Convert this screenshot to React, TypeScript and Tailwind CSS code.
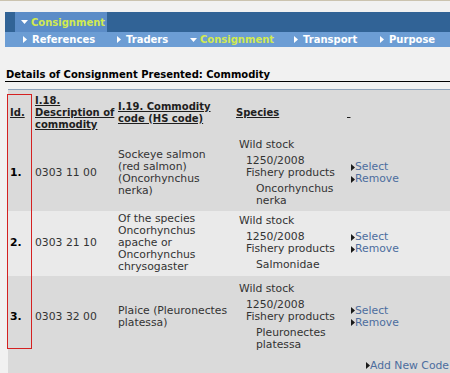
import React from 'react'

const font = { fontFamily: '"DejaVu Sans", Verdana, sans-serif' }

const Right = ({ className = 'fill-white' }: { className?: string }) => (
  <svg width="4" height="7" viewBox="0 0 4 7" className={className}>
    <path d="M0 0 L4 3.5 L0 7 Z" />
  </svg>
)

const Down = ({ className = 'fill-white' }: { className?: string }) => (
  <svg width="7" height="4" viewBox="0 0 7 4" className={className}>
    <path d="M0 0 L7 0 L3.5 4 Z" />
  </svg>
)

interface Row {
  id: string
  code: string
  desc: string[]
  group: string
  reg: string[]
  species: string[]
  h: string
  bg: string
}

const rows: Row[] = [
  {
    id: '1.',
    code: '0303 11 00',
    desc: ['Sockeye salmon', '(red salmon)', '(Oncorhynchus', 'nerka)'],
    group: 'Wild stock',
    reg: ['1250/2008', 'Fishery products'],
    species: ['Oncorhynchus', 'nerka'],
    h: 'h-[75px]',
    bg: 'bg-[#dadada]',
  },
  {
    id: '2.',
    code: '0303 21 10',
    desc: ['Of the species', 'Oncorhynchus', 'apache or', 'Oncorhynchus', 'chrysogaster'],
    group: 'Wild stock',
    reg: ['1250/2008', 'Fishery products'],
    species: ['Salmonidae'],
    h: 'h-[65px]',
    bg: 'bg-[#eaeaea]',
  },
  {
    id: '3.',
    code: '0303 32 00',
    desc: ['Plaice (Pleuronectes', 'platessa)'],
    group: 'Wild stock',
    reg: ['1250/2008', 'Fishery products'],
    species: ['Pleuronectes', 'platessa'],
    h: 'h-[82px]',
    bg: 'bg-[#dadada]',
  },
]

const Lines = ({ items }: { items: string[] }) => (
  <>
    {items.map((t, i) => (
      <div key={i}>{t}</div>
    ))}
  </>
)

const ActionLink = ({ label }: { label: string }) => (
  <div className="flex items-center">
    <Right className="fill-[#1a1a1a]" />
    <span className="text-[#4c6d9e]">{label}</span>
  </div>
)

export default function App() {
  return (
    <div
      className="relative w-[450px] h-[373px] overflow-hidden bg-[#f1f1f1] border-t border-[#cbc3af]"
      style={font}
    >
      {/* navigation */}
      <div className="pt-[11px] pl-[5px]">
        <div className="flex h-[20px] bg-[#316396]">
          <div className="ml-[10px] flex w-[92px] items-center gap-[3px] bg-[#5b8cc7] pl-[6px] text-[10px] font-bold text-[#d2ea4f]">
            <Down />
            <span>Consignment</span>
          </div>
        </div>
        <div className="flex h-[15px] items-center bg-[#6c9dd4] pl-[18px] text-[10px] font-bold text-white">
          <div className="flex w-[94px] items-center gap-[5px]">
            <Right />
            <span>References</span>
          </div>
          <div className="flex w-[73px] items-center gap-[5px]">
            <Right />
            <span>Traders</span>
          </div>
          <div className="flex w-[104px] items-center gap-[3px] text-[#d2ea4f]">
            <Down />
            <span>Consignment</span>
          </div>
          <div className="flex w-[86px] items-center gap-[5px]">
            <Right />
            <span>Transport</span>
          </div>
          <div className="flex items-center gap-[5px]">
            <Right />
            <span>Purpose</span>
          </div>
        </div>

        {/* heading */}
        <div className="mt-[21px] border-b border-black pl-[1px] text-[10px] font-bold leading-[13px] text-black">
          Details of Consignment Presented: Commodity
        </div>
      </div>

      {/* table */}
      <table className="mt-[7px] ml-[8px] w-[442px] table-fixed border-collapse border-t border-[#8ea3ba] bg-[#dadada] text-[10.8px] leading-[12px] text-[#333]">
        <colgroup>
          <col className="w-[25px]" />
          <col className="w-[83px]" />
          <col className="w-[118px]" />
          <col className="w-[112px]" />
          <col />
        </colgroup>
        <thead>
          <tr className="h-[46px] align-middle text-[10px] font-bold text-[#1e1e1e] underline">
            <th className="pl-[2px] text-left font-bold">Id.</th>
            <th className="pl-[2px] text-left font-bold">
              <div>I.18.</div>
              <div className="whitespace-nowrap">Description of</div>
              <div>commodity</div>
            </th>
            <th className="pl-[2px] text-left font-bold">
              <div>I.19. Commodity</div>
              <div>code (HS code)</div>
            </th>
            <th className="pl-[2px] text-left font-bold">Species</th>
            <th className="pl-[1px] text-left font-bold">&nbsp;</th>
          </tr>
        </thead>
        <tbody>
          {rows.map((r) => (
            <tr key={r.id} className={`${r.h} ${r.bg} align-middle`}>
              <td className="pl-[2px] font-bold text-black">{r.id}</td>
              <td className="pl-[2px]">{r.code}</td>
              <td className="pl-[2px]">
                <Lines items={r.desc} />
              </td>
              <td className="pl-[5px]">
                <div>{r.group}</div>
                <div className="mt-[4px] pl-[7px] whitespace-nowrap">
                  <Lines items={r.reg} />
                </div>
                <div className="mt-[4px] pl-[17px]">
                  <Lines items={r.species} />
                </div>
              </td>
              <td className="pl-[5px]">
                <ActionLink label="Select" />
                <ActionLink label="Remove" />
              </td>
            </tr>
          ))}
          <tr className="h-[16px]">
            <td colSpan={5} className="pr-[1px] pt-[2px] align-top">
              <div className="flex justify-end">
                <ActionLink label="Add New Code" />
              </div>
            </td>
          </tr>
        </tbody>
      </table>

      {/* red annotation box */}
      <div className="absolute left-[7px] top-[93px] h-[255px] w-[25px] border border-[#d42121]" />
    </div>
  )
}
